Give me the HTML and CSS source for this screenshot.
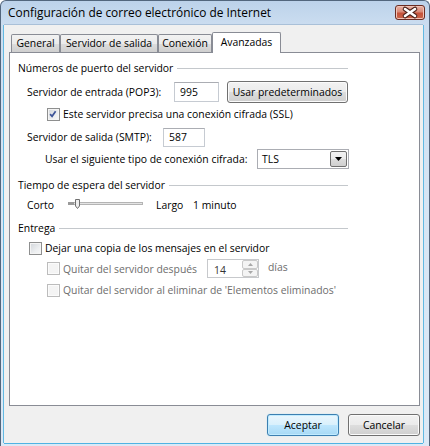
FILE: index.html
```html
<!DOCTYPE html>
<html lang="es">
<head>
  <meta charset="UTF-8">
  <title>Configuración de correo electrónico de Internet</title>
  <link rel="stylesheet" href="styles.css">
</head>
<body>
  <div class="window">
    <div class="titlebar">
      <span class="title">Configuración de correo electrónico de Internet</span>
      <button class="close-btn" title="Cerrar">
        <svg viewBox="0 0 30 15" width="30" height="15">
          <path d="M10 4 L20 11 M20 4 L10 11" stroke="#4a2119" stroke-width="4.6" stroke-linecap="round"/>
          <path d="M10 4 L20 11 M20 4 L10 11" stroke="#fff" stroke-width="2.6" stroke-linecap="round"/>
        </svg>
      </button>
    </div>
    <div class="client">
      <div class="tabs">
        <span class="tab t-general">General</span>
        <span class="tab t-salida">Servidor de salida</span>
        <span class="tab t-conexion">Conexión</span>
        <span class="tab t-avanzadas active">Avanzadas</span>
      </div>
      <div class="panel">
        <div class="group-title">Números de puerto del servidor</div>
        <div class="row r-pop">
          <span class="lbl">Servidor de entrada (POP3):</span>
          <span class="field f-pop">995</span>
          <span class="btn btn-defaults">Usar predeterminados</span>
        </div>
        <div class="row r-ssl">
          <span class="cb">
            <svg viewBox="0 0 13 13" width="11" height="11"><path d="M2.5 6 L4.8 8.6 L9 2.6" fill="none" stroke="#3d5498" stroke-width="2"/></svg>
          </span>
          <span>Este servidor precisa una conexión cifrada (SSL)</span>
        </div>
        <div class="row r-smtp">
          <span class="lbl">Servidor de salida (SMTP):</span>
          <span class="field f-smtp">587</span>
        </div>
        <div class="row r-tls">
          <span class="lbl">Usar el siguiente tipo de conexión cifrada:</span>
          <span class="select">
            <span class="select-value">TLS</span>
            <span class="select-arrow">
              <svg viewBox="0 0 7 4" width="7" height="4"><path d="M0 0 H7 L3.5 4 Z" fill="#000"/></svg>
            </span>
          </span>
        </div>
        <div class="group-title g-timeout">Tiempo de espera del servidor</div>
        <div class="row r-slider">
          <span class="lbl lbl-short">Corto</span>
          <svg class="slider" viewBox="0 0 75 12" width="75" height="12">
            <rect x="0.5" y="3.5" width="74" height="2" fill="#e4e4e4" stroke="#b4b4b4"/>
            <rect x="0" y="3" width="6" height="3" fill="#9a9a9a"/>
            <path d="M7.5 0.5 H11.5 V7 L9.5 9.5 L7.5 7 Z" fill="#eeeeee" stroke="#6f6f6f"/>
          </svg>
          <span class="lbl lbl-long">Largo</span>
          <span>1 minuto</span>
        </div>
        <div class="group-title g-delivery">Entrega</div>
        <div class="row r-keep">
          <span class="cb"></span>
          <span>Dejar una copia de los mensajes en el servidor</span>
        </div>
        <div class="row r-after disabled">
          <span class="cb"></span>
          <span class="lbl lbl-after">Quitar del servidor después</span>
          <span class="spin">
            <span class="spin-value">14</span>
            <span class="spin-buttons">
              <span class="spin-btn"><svg viewBox="0 0 5 3" width="5" height="3"><path d="M0 3 H5 L2.5 0 Z" fill="#a8a8a8"/></svg></span>
              <span class="spin-btn"><svg viewBox="0 0 5 3" width="5" height="3"><path d="M0 0 H5 L2.5 3 Z" fill="#a8a8a8"/></svg></span>
            </span>
          </span>
          <span class="days">días</span>
        </div>
        <div class="row r-deleted disabled">
          <span class="cb"></span>
          <span>Quitar del servidor al eliminar de 'Elementos eliminados'</span>
        </div>
      </div>
      <div class="actions">
        <button class="btn btn-ok">Aceptar</button>
        <button class="btn">Cancelar</button>
      </div>
    </div>
  </div>
</body>
</html>
```

FILE: styles.css
```css
body {
  margin: 0;
  background: #fff;
  font-family: "Segoe UI", "Open Sans", sans-serif;
  font-size: 10.4px;
  color: #000;
}
.window {
  box-sizing: border-box;
  width: 430px; height: 446px;
  border: 1px solid #52667d; border-bottom: 0;
  border-radius: 6px 6px 0 0;
  background: linear-gradient(180deg, #bcd2ea 0%, #cbddf0 24px, #d6e5f4 200px, #dce9f6 100%);
  display: flex; flex-direction: column;
  overflow: hidden;
}
.titlebar {
  height: 24px; flex: none;
  display: flex; align-items: flex-start;
  padding-left: 7px;
}
.title { font-size: 11.9px; line-height: 24px; margin-top: -1px; }
.close-btn {
  margin-left: auto; margin-right: 4px; margin-top: 4px;
  width: 30px; height: 15px; padding: 0;
  border: 1px solid #6b2c22; border-radius: 3px;
  background: linear-gradient(180deg, #e9b1a4 0%, #d98a77 45%, #c6533b 55%, #c9664b 100%);
  box-shadow: inset 0 0 0 1px #f0c4b8;
  display: flex; align-items: center; justify-content: center;
}
.close-btn svg { display: block; margin: -1px; }
.client {
  box-sizing: border-box;
  width: 419px; height: 418px;
  margin-left: 3px;
  padding: 7px 3px 0 5px;
  background: #f0f0f0;
  box-shadow: -1px 0 0 #62b9e2, 1px 0 0 #62b9e2, 0 1px 0 #4fb3e3, 0 -1px 0 #a9c0d8;
}
.tabs {
  display: flex; align-items: flex-end;
  height: 20px; margin-left: 2px;
}
.tab {
  box-sizing: border-box;
  height: 18px;
  border: 1px solid #898c95; border-bottom: 0;
  border-radius: 2px 2px 0 0;
  background: linear-gradient(180deg, #f2f2f2 0%, #ebebeb 50%, #dddddd 51%, #cfcfcf 100%);
  display: flex; align-items: center; justify-content: center;
  padding-bottom: 1px;
}
.t-general { width: 49px; }
.t-salida { width: 98px; }
.t-conexion { width: 54px; }
.t-avanzadas { width: 69px; }
.tab.active {
  height: 21px; margin-bottom: -1px;
  background: #fff;
  position: relative; z-index: 1;
  padding-bottom: 3px;
}
.panel {
  box-sizing: border-box;
  width: 411px; height: 354px;
  border: 1px solid #898c95;
  background: #fff;
  padding-top: 7px;
  display: flex; flex-direction: column;
}
.group-title {
  display: flex; align-items: center;
  height: 16px; width: 330px; margin-left: 8px;
  white-space: nowrap;
}
.group-title::after {
  content: ""; flex: 1;
  border-top: 1px solid #c4c8cc;
  margin-left: 4px; margin-top: 1px;
}
.g-timeout { margin-top: 8px; }
.g-delivery { margin-top: 6px; }
.row { display: flex; align-items: center; white-space: nowrap; }
.lbl { flex: none; }
.field {
  box-sizing: border-box;
  background: #fff;
  border: 1px solid #c6cbd2; border-top-color: #abadb3;
  display: flex; align-items: center;
  padding-left: 5px;
}
.btn {
  box-sizing: border-box;
  font: inherit; color: #000;
  border: 1px solid #707070; border-radius: 3px;
  background: linear-gradient(180deg, #f2f2f2 0%, #ebebeb 49%, #dddddd 51%, #cfcfcf 100%);
  box-shadow: inset 0 0 0 1px #fbfbfb;
  display: flex; align-items: center; justify-content: center;
  padding: 0 0 1px;
}
.r-pop { height: 22px; margin-top: 5px; padding-left: 17px; }
.r-pop .lbl { width: 147px; }
.f-pop { width: 45px; height: 20px; }
.btn-defaults { width: 121px; height: 22px; margin-left: 8px; }
.r-ssl { height: 16px; margin-top: 3px; padding-left: 37px; }
.cb {
  box-sizing: border-box; flex: none;
  width: 13px; height: 13px; margin-right: 3px;
  border: 1px solid #8e8f8f;
  background: linear-gradient(135deg, #d1d5da 0%, #eceef0 60%, #f8f8f8 100%);
  box-shadow: inset 0 0 0 1px #f4f4f4;
  display: flex; align-items: center; justify-content: center;
}
.cb svg { display: block; }
.r-smtp { height: 20px; margin-top: 5px; padding-left: 17px; }
.r-smtp .lbl { width: 136px; }
.f-smtp { width: 42px; height: 19px; }
.r-tls { height: 20px; margin-top: 2px; padding-left: 35px; }
.r-tls .lbl { width: 212px; }
.select {
  box-sizing: border-box;
  width: 92px; height: 20px;
  border: 1px solid #abadb3;
  background: #fff;
  display: flex; align-items: center;
}
.select-value { flex: 1; padding-left: 4px; }
.select-arrow {
  box-sizing: border-box;
  width: 17px; height: 16px; margin-right: 1px;
  border: 1px solid #707070; border-radius: 2px;
  background: linear-gradient(180deg, #f2f2f2 0%, #ebebeb 49%, #dddddd 51%, #cfcfcf 100%);
  display: flex; align-items: center; justify-content: center;
}
.select-arrow svg { display: block; }
.r-slider { height: 18px; margin-top: 3px; padding-left: 17px; }
.lbl-short { width: 41px; }
.slider { display: block; flex: none; margin-top: -1px; }
.lbl-long { width: 37px; margin-left: 13px; }
.r-keep { height: 16px; margin-top: 4px; padding-left: 19px; }
.r-after { height: 19px; margin-top: 3px; padding-left: 37px; }
.lbl-after { width: 144px; }
.disabled { color: #6d6d6d; }
.disabled .cb {
  border-color: #bcbcbc;
  background: #f4f4f4;
  box-shadow: inset 0 0 0 1px #fbfbfb;
}
.spin {
  box-sizing: border-box;
  width: 52px; height: 19px;
  border: 1px solid #c7c9cc;
  background: #fff;
  display: flex; align-items: center;
}
.spin-value { flex: 1; padding-left: 6px; color: #333; margin-top: 2px; }
.spin-buttons {
  display: flex; flex-direction: column;
  width: 16px; height: 17px;
}
.spin-btn {
  box-sizing: border-box;
  height: 8.5px;
  border: 1px solid #c9c9c9; border-radius: 2px;
  background: #f4f4f4;
  display: flex; align-items: center; justify-content: center;
}
.spin-btn svg { display: block; }
.days { margin-left: 9px; margin-top: -3px; }
.r-deleted { height: 16px; margin-top: 4px; padding-left: 37px; }
.actions {
  display: flex; justify-content: flex-end; gap: 9px;
  width: 411px; margin-top: 8px;
}
.actions .btn { width: 72px; height: 22px; }
.btn-ok {
  border-color: #3c7fb1;
  background: linear-gradient(180deg, #eaf6fd 0%, #d9f0fc 49%, #bee6fd 51%, #a7d9f5 100%);
  box-shadow: inset 0 0 0 1px #c0ebff, 0 0 1px #7fd0f5;
}
```
